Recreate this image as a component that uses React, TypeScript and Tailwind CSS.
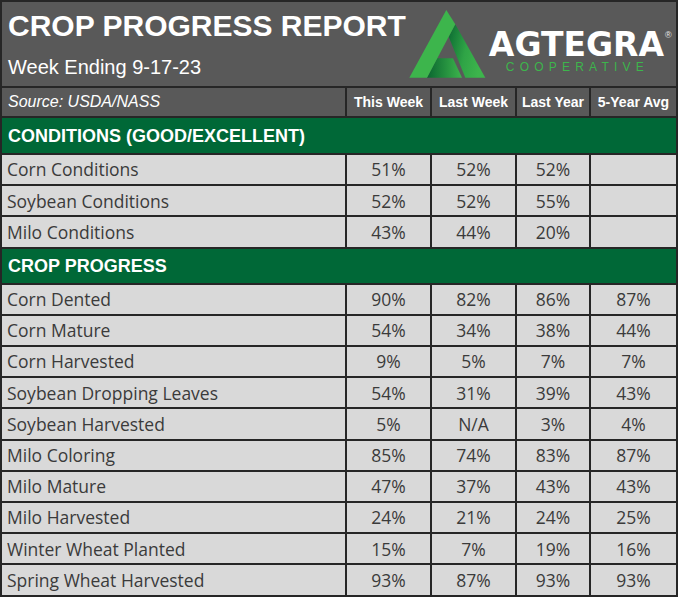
const conditions = [
  ["Corn Conditions", "51%", "52%", "52%", ""],
  ["Soybean Conditions", "52%", "52%", "55%", ""],
  ["Milo Conditions", "43%", "44%", "20%", ""],
];

const progress = [
  ["Corn Dented", "90%", "82%", "86%", "87%"],
  ["Corn Mature", "54%", "34%", "38%", "44%"],
  ["Corn Harvested", "9%", "5%", "7%", "7%"],
  ["Soybean Dropping Leaves", "54%", "31%", "39%", "43%"],
  ["Soybean Harvested", "5%", "N/A", "3%", "4%"],
  ["Milo Coloring", "85%", "74%", "83%", "87%"],
  ["Milo Mature", "47%", "37%", "43%", "43%"],
  ["Milo Harvested", "24%", "21%", "24%", "25%"],
  ["Winter Wheat Planted", "15%", "7%", "19%", "16%"],
  ["Spring Wheat Harvested", "93%", "87%", "93%", "93%"],
];

const grid = "grid grid-cols-[345px_85px_85px_74px_85px]";

function Logo() {
  return (
    <div className="flex items-start">
      <svg width="80" height="70" viewBox="0 0 80 70" className="mt-[6px] shrink-0">
        <defs>
          <linearGradient id="rightLeg" x1="0" y1="0" x2="1" y2="0.3">
            <stop offset="0" stopColor="#0b6a32" />
            <stop offset="0.55" stopColor="#2fa446" />
            <stop offset="1" stopColor="#3db54c" />
          </linearGradient>
          <linearGradient id="crossBar" x1="0" y1="0" x2="1" y2="0">
            <stop offset="0" stopColor="#0a6630" />
            <stop offset="1" stopColor="#3db54c" />
          </linearGradient>
        </defs>
        <polygon points="49.3,16.3 79.3,69.7 59.3,69.7 42.7,28.7" fill="url(#rightLeg)" />
        <polygon points="31,50.3 47,50.3 56,69.7 21,69.7" fill="url(#crossBar)" />
        <polygon points="40.3,2 49.3,16.3 21,69.7 3.3,69.7" fill="#3db54c" />
      </svg>
      <div className="ml-[3px] mt-[26px] flex flex-col whitespace-nowrap">
        <div className="flex items-start">
          <span className="font-['DejaVu_Sans',sans-serif] text-[33px] font-bold leading-none text-white">AGTEGRA</span>
          <span className="ml-[1px] mt-[3px] font-['Liberation_Sans',sans-serif] text-[9px] leading-none text-[#e6e6e6]">®</span>
        </div>
        <span className="ml-[17px] font-['Liberation_Sans',sans-serif] text-[12px] leading-none tracking-[5.2px] text-[#3db54c]">COOPERATIVE</span>
      </div>
    </div>
  );
}

function DataRow({ row, last }: { row: string[]; last?: boolean }) {
  return (
    <div className={`${grid} ${last ? "flex-1" : "h-[31.2px] border-b-2"} border-[#262626] bg-[#d9d9d9] font-['Open_Sans',sans-serif] text-[17.5px] text-[#3b3b3b]`}>
      {row.map((cell, i) => (
        <div
          key={i}
          className={`flex items-center border-[#262626] ${i === 0 ? "pl-[5px]" : "justify-center"} ${i < 4 ? "border-r-2" : ""}`}
        >
          {cell}
        </div>
      ))}
    </div>
  );
}

function SectionRow({ label, height }: { label: string; height: string }) {
  return (
    <div className={`flex items-center border-b-2 border-[#262626] bg-[#006837] pl-[6px] pt-[2px] font-['Liberation_Sans',sans-serif] text-[18px] font-bold text-white ${height}`}>
      {label}
    </div>
  );
}

export default function App() {
  const headers = ["This Week", "Last Week", "Last Year", "5-Year Avg"];

  return (
    <div className="flex h-[597px] w-[678px] flex-col border-2 border-[#262626] bg-[#d9d9d9]">
      <div className="flex h-[86px] border-b-2 border-[#262626] bg-[#595959]">
        <div className="flex shrink-0 flex-col whitespace-nowrap pl-[6px] pt-[9px] font-['Liberation_Sans',sans-serif] text-white">
          <h1 className="text-[30px] font-bold leading-none">CROP PROGRESS REPORT</h1>
          <p className="mt-[16px] text-[20px] leading-none">Week Ending 9-17-23</p>
        </div>
        <div className="ml-auto mr-[6px]">
          <Logo />
        </div>
      </div>

      <div className={`${grid} h-[30px] border-b-2 border-[#262626] bg-[#595959] font-['Liberation_Sans',sans-serif] text-white`}>
        <div className="flex items-center border-r-2 border-[#262626] pl-[6px] text-[16px] italic">Source: USDA/NASS</div>
        {headers.map((h, i) => (
          <div key={h} className={`flex items-center justify-center whitespace-nowrap border-[#262626] text-[14px] font-bold ${i < 3 ? "border-r-2" : ""}`}>
            {h}
          </div>
        ))}
      </div>

      <SectionRow label="CONDITIONS (GOOD/EXCELLENT)" height="h-[37px]" />
      {conditions.map((row) => (
        <DataRow key={row[0]} row={row} />
      ))}

      <SectionRow label="CROP PROGRESS" height="h-[36px]" />
      {progress.map((row, i) => (
        <DataRow key={row[0]} row={row} last={i === progress.length - 1} />
      ))}
    </div>
  );
}
